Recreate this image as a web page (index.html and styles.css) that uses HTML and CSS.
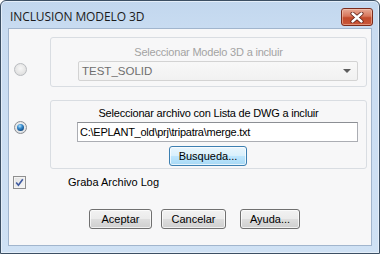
FILE: index.html
```html
<!DOCTYPE html>
<html>
<head>
<meta charset="utf-8">
<link rel="stylesheet" href="styles.css">
</head>
<body>
<div class="window">
  <div class="titlebar">
    <span class="title">INCLUSION MODELO 3D</span>
    <div class="close">
      <svg width="14" height="11" viewBox="0 0 14 11">
        <path d="M2.5 1.5 L11.5 9.5 M11.5 1.5 L2.5 9.5" stroke="#5a1a10" stroke-width="4" stroke-linecap="round"/>
        <path d="M2.5 1.5 L11.5 9.5 M11.5 1.5 L2.5 9.5" stroke="#ffffff" stroke-width="2.4" stroke-linecap="round"/>
      </svg>
    </div>
  </div>
  <div class="client">
    <div class="row row1">
      <span class="radio disabled r1"></span>
      <div class="group g1">
        <div class="glabel muted">Seleccionar Modelo 3D a incluir</div>
        <div class="combo">
          <span class="combo-text">TEST_SOLID</span>
          <span class="arrow"></span>
        </div>
      </div>
    </div>
    <div class="row row2">
      <span class="radio checked r2"><span class="dot"></span></span>
      <div class="group g2">
        <div class="glabel">Seleccionar archivo con Lista de DWG a incluir</div>
        <div class="input">C:\EPLANT_old\prj\tripatra\merge.txt</div>
        <button class="btn hot busq">Busqueda...</button>
      </div>
    </div>
    <div class="checkrow">
      <span class="checkbox">
        <svg width="9" height="9" viewBox="0 0 9 9"><path d="M1.2 4.6 L3.4 7.2 L7.8 1.2" fill="none" stroke="#3e5aa0" stroke-width="1.6"/></svg>
      </span>
      <span class="clabel">Graba Archivo Log</span>
    </div>
    <div class="buttons">
      <button class="btn b-acep">Aceptar</button>
      <button class="btn b-canc">Cancelar</button>
      <button class="btn b-ayu">Ayuda...</button>
    </div>
  </div>
</div>
</body>
</html>
```

FILE: styles.css
```css
* { box-sizing: border-box; }
html, body { margin: 0; padding: 0; }
body {
  width: 380px; height: 254px; overflow: hidden;
  font-family: "Liberation Sans", Arial, sans-serif;
  font-size: 11px;
  color: #000;
  background: #ffffff;
}
.window {
  width: 380px; height: 254px;
  border: 1px solid #3c4f63;
  border-radius: 6px 6px 0 0;
  background: linear-gradient(#c2d7ee 0px, #c9dcf1 30px, #cfe1f4 100%);
  display: flex; flex-direction: column;
  box-shadow: inset 0 0 0 1px #e4eef9;
}
.titlebar {
  height: 27px; flex: none;
  display: flex; align-items: flex-start;
  padding: 0 6px 0 9px;
}
.title {
  margin-top: 9px;
  font-family: "Open Sans", "Liberation Sans", sans-serif;
  font-size: 12px; line-height: 14px;
  color: #1a1a1a;
  letter-spacing: -0.1px;
}
.close {
  margin-left: auto; margin-top: 7px;
  width: 32px; height: 18px;
  border: 1px solid #7b2b1c;
  border-radius: 3px;
  background: linear-gradient(#e7a995 0%, #d8765b 45%, #c24a2b 55%, #c9573a 100%);
  box-shadow: inset 0 0 0 1px rgba(255,220,200,0.45);
  display: flex; align-items: center; justify-content: center;
}
.client {
  flex: 1; margin: 0 7px 7px 7px;
  border: 1px solid #a1b5cd;
  background: #f7f7f8;
  padding: 8px 4px 0 5px;
  display: flex; flex-direction: column;
}
.row { display: flex; align-items: flex-start; }
.row2 { margin-top: 13px; }
.radio {
  width: 13px; height: 13px; border-radius: 50%;
  flex: none; position: relative;
  display: flex; align-items: center; justify-content: center;
}
.r1 { margin-top: 26px; margin-right: 23px; }
.r2 { margin-top: 21px; margin-right: 23px; }
.radio.disabled {
  border: 1px solid #b9bcc0;
  background: radial-gradient(circle at 50% 40%, #f7f7f7 0%, #e6e6e6 55%, #d6d6d6 100%);
}
.radio.checked {
  border: 1px solid #8a8d92;
  background: radial-gradient(circle at 50% 40%, #f6f6f6 0%, #e0e3e6 70%, #cfd3d8 100%);
}
.dot {
  width: 7px; height: 7px; border-radius: 50%;
  background: radial-gradient(circle at 40% 30%, #b8e4fb 0%, #3b8fd0 35%, #124c86 75%, #0b2f57 100%);
}
.group {
  width: 317px;
  border: 1px solid #d9dde2;
  border-radius: 3px;
  display: flex; flex-direction: column;
}
.g1 { height: 50px; padding: 8px 8px 5px 27px; }
.g2 { padding: 6px 8px 2px 26px; }
.glabel {
  line-height: 13px; height: 13px;
  text-align: center;
  margin-left: -27px; margin-right: -8px;
  white-space: nowrap;
  letter-spacing: -0.2px;
}
.g2 .glabel { margin-left: -26px; }
.muted { color: #a3a3a3; }
.combo {
  margin-top: 2px; height: 20px;
  border: 1px solid #d3d3d3;
  border-radius: 2px;
  background: linear-gradient(#f8f8f8, #f1f1f1);
  display: flex; align-items: center;
  padding: 0 6px 0 3px;
}
.combo-text { color: #6e6e6e; font-size: 11.5px; }
.arrow {
  margin-left: auto;
  width: 0; height: 0;
  border-left: 4px solid transparent;
  border-right: 4px solid transparent;
  border-top: 4px solid #5c5c5c;
}
.input {
  margin-top: 2px; height: 20px;
  border: 1px solid #abadb3;
  border-top-color: #8c8f94;
  background: #fff;
  padding: 0 2px;
  line-height: 18px;
  white-space: nowrap;
  letter-spacing: -0.25px;
}
.btn {
  font-family: "Liberation Sans", Arial, sans-serif;
  font-size: 11px; color: #000;
  height: 20px;
  border: 1px solid #707070;
  border-radius: 3px;
  background: linear-gradient(#f2f2f2 0%, #ebebeb 48%, #dddddd 52%, #cfcfcf 100%);
  box-shadow: inset 0 0 0 1px rgba(255,255,255,0.7);
  padding: 0;
}
.btn.hot {
  border-color: #3c7fb1;
  background: linear-gradient(#eaf6fd 0%, #d9f0fc 48%, #bee6fd 52%, #a7d9f5 100%);
}
.busq { width: 78px; margin-top: 4px; align-self: flex-start; margin-left: 92px; }
.checkrow {
  display: flex; align-items: center;
  margin-top: 7px; height: 13px;
}
.checkbox {
  width: 13px; height: 13px; margin-left: -1px;
  border: 1px solid #8f8f8f;
  background: linear-gradient(135deg, #e2e2e2, #f6f6f6);
  box-shadow: inset 0 0 0 1px #f4f4f4;
  display: flex; align-items: center; justify-content: center;
}
.clabel { margin-left: 42px; line-height: 13px; }
.buttons {
  display: flex; margin-top: 20px; padding-left: 75px;
}
.b-acep { width: 63px; }
.b-canc { width: 65px; margin-left: 9px; }
.b-ayu { width: 60px; margin-left: 14px; }
```
